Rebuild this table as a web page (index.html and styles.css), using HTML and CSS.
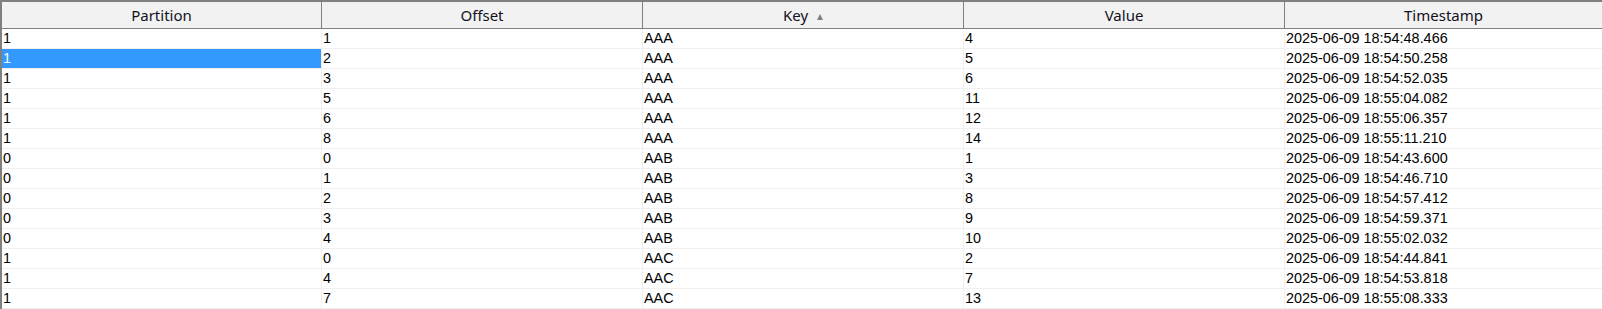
FILE: index.html
```html
<!DOCTYPE html>
<html>
<head>
<meta charset="utf-8">
<link rel="stylesheet" href="styles.css">
</head>
<body>
<div class="grid">
  <div class="hcell">Partition</div>
  <div class="hcell">Offset</div>
  <div class="hcell"><span>Key</span><span class="sort"></span></div>
  <div class="hcell">Value</div>
  <div class="hcell last">Timestamp</div>

  <div class="cell">1</div><div class="cell">1</div><div class="cell">AAA</div><div class="cell">4</div><div class="cell last">2025-06-09 18:54:48.466</div>
  <div class="cell sel">1</div><div class="cell">2</div><div class="cell">AAA</div><div class="cell">5</div><div class="cell last">2025-06-09 18:54:50.258</div>
  <div class="cell">1</div><div class="cell">3</div><div class="cell">AAA</div><div class="cell">6</div><div class="cell last">2025-06-09 18:54:52.035</div>
  <div class="cell">1</div><div class="cell">5</div><div class="cell">AAA</div><div class="cell">11</div><div class="cell last">2025-06-09 18:55:04.082</div>
  <div class="cell">1</div><div class="cell">6</div><div class="cell">AAA</div><div class="cell">12</div><div class="cell last">2025-06-09 18:55:06.357</div>
  <div class="cell">1</div><div class="cell">8</div><div class="cell">AAA</div><div class="cell">14</div><div class="cell last">2025-06-09 18:55:11.210</div>
  <div class="cell">0</div><div class="cell">0</div><div class="cell">AAB</div><div class="cell">1</div><div class="cell last">2025-06-09 18:54:43.600</div>
  <div class="cell">0</div><div class="cell">1</div><div class="cell">AAB</div><div class="cell">3</div><div class="cell last">2025-06-09 18:54:46.710</div>
  <div class="cell">0</div><div class="cell">2</div><div class="cell">AAB</div><div class="cell">8</div><div class="cell last">2025-06-09 18:54:57.412</div>
  <div class="cell">0</div><div class="cell">3</div><div class="cell">AAB</div><div class="cell">9</div><div class="cell last">2025-06-09 18:54:59.371</div>
  <div class="cell">0</div><div class="cell">4</div><div class="cell">AAB</div><div class="cell">10</div><div class="cell last">2025-06-09 18:55:02.032</div>
  <div class="cell">1</div><div class="cell">0</div><div class="cell">AAC</div><div class="cell">2</div><div class="cell last">2025-06-09 18:54:44.841</div>
  <div class="cell">1</div><div class="cell">4</div><div class="cell">AAC</div><div class="cell">7</div><div class="cell last">2025-06-09 18:54:53.818</div>
  <div class="cell">1</div><div class="cell">7</div><div class="cell">AAC</div><div class="cell">13</div><div class="cell last">2025-06-09 18:55:08.333</div>
</div>
</body>
</html>
```

FILE: styles.css
```css
html, body {
  margin: 0;
  padding: 0;
  background: #ffffff;
  overflow: hidden;
}

.grid {
  display: grid;
  grid-template-columns: 320px 321px 321px 321px 1fr;
  border-top: 2px solid #808080;
  border-left: 2px solid #808080;
  width: 1600px;
}

.hcell {
  height: 26px;
  line-height: 26px;
  background: #f2f2f2;
  border-right: 1px solid #808080;
  border-bottom: 1px solid #808080;
  font-family: "Noto Sans", "Open Sans", sans-serif;
  font-size: 15px;
  color: #111122;
  display: flex;
  justify-content: center;
  align-items: center;
  white-space: nowrap;
}

.hcell.last {
  border-right: none;
}

.sort {
  width: 0;
  height: 0;
  margin-left: 9px;
  margin-top: 3px;
  border-left: 3.5px solid transparent;
  border-right: 3.5px solid transparent;
  border-bottom: 6px solid #808080;
}

.cell {
  box-sizing: border-box;
  height: 20px;
  line-height: 17px;
  padding: 1px 0 0 1px;
  border-right: 1px solid #f0f0f0;
  border-bottom: 1px solid #f0f0f0;
  font-family: "Liberation Sans", Arial, sans-serif;
  font-size: 14.4px;
  color: #000000;
  white-space: nowrap;
  overflow: hidden;
}

.cell.last {
  border-right: none;
}

.cell.sel {
  background: #3399ff;
  color: #ffffff;
}
```
